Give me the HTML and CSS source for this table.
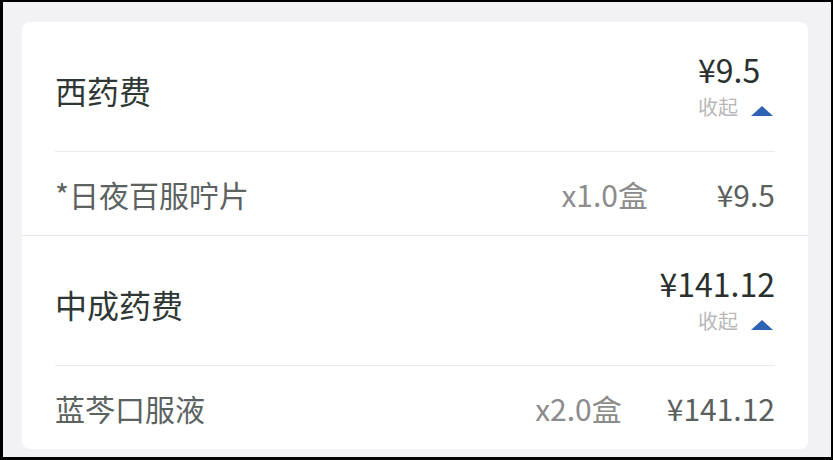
FILE: index.html
```html
<!DOCTYPE html>
<html lang="zh-CN">
<head>
    <meta charset="UTF-8">
    <meta name="viewport" content="width=device-width, initial-scale=1.0">
    <title>费用明细</title>
    <link rel="stylesheet" href="styles.css">
</head>
<body>
    <div class="frame">
        <div class="card">
            <!-- 西药费 -->
            <div class="group">
                <div class="group-head">
                    <span class="group-title">西药费</span>
                    <div class="group-side">
                        <div class="group-total">¥9.5</div>
                        <div class="toggle">收起<span class="arrow"></span></div>
                    </div>
                </div>
                <div class="item">
                    <span class="item-name">*日夜百服咛片</span>
                    <span class="item-qty">x1.0盒</span>
                    <span class="item-price">¥9.5</span>
                </div>
            </div>

            <!-- 中成药费 -->
            <div class="group">
                <div class="group-head">
                    <span class="group-title">中成药费</span>
                    <div class="group-side">
                        <div class="group-total">¥141.12</div>
                        <div class="toggle">收起<span class="arrow"></span></div>
                    </div>
                </div>
                <div class="item">
                    <span class="item-name">蓝芩口服液</span>
                    <span class="item-qty">x2.0盒</span>
                    <span class="item-price">¥141.12</span>
                </div>
            </div>
        </div>
    </div>
</body>
</html>
```

FILE: styles.css
```css
body {
    margin: 0;
    padding: 0;
    font-family: "Noto Sans CJK SC", "Noto Sans", sans-serif;
}

.frame {
    box-sizing: border-box;
    height: 460px;
    border: 2px solid #000;
    border-left-width: 3px;
    border-bottom-width: 3px;
    background-color: #f2f2f4;
    padding: 20px 23px 0 19px;
    overflow: hidden;
}

.card {
    background-color: #fff;
    border-radius: 8px;
    overflow: hidden;
}

/* Group header */
.group-head {
    margin: 0 33px;
    height: 129px;
    border-bottom: 1px solid #ebebeb;
    display: flex;
    align-items: center;
    justify-content: space-between;
}

.group-title {
    font-size: 32px;
    color: #2f3734;
    padding-top: 6px;
}

.group-side {
    display: flex;
    flex-direction: column;
    margin-bottom: 6px;
}

.group-total {
    font-size: 32px;
    color: #2a302e;
}

.toggle {
    align-self: flex-end;
    display: flex;
    align-items: center;
    margin-right: 2px;
    font-size: 20px;
    color: #b8b8b8;
}

.toggle .arrow {
    width: 0;
    height: 0;
    margin-left: 13px;
    margin-top: 8px;
    border-left: 11px solid transparent;
    border-right: 11px solid transparent;
    border-bottom: 10px solid #2d62b4;
}

/* Item row */
.item {
    height: 83px;
    padding: 0 33px;
    border-bottom: 1px solid #e8e8e8;
    display: flex;
    align-items: center;
    font-size: 30px;
}

.group:last-child .item {
    border-bottom: none;
}

.item-name {
    flex: 1;
    color: #5b625f;
}

.item-qty {
    color: #8c8c8c;
    margin-right: 45px;
}

.item-price {
    min-width: 82px;
    text-align: right;
    color: #5a605e;
}
```
